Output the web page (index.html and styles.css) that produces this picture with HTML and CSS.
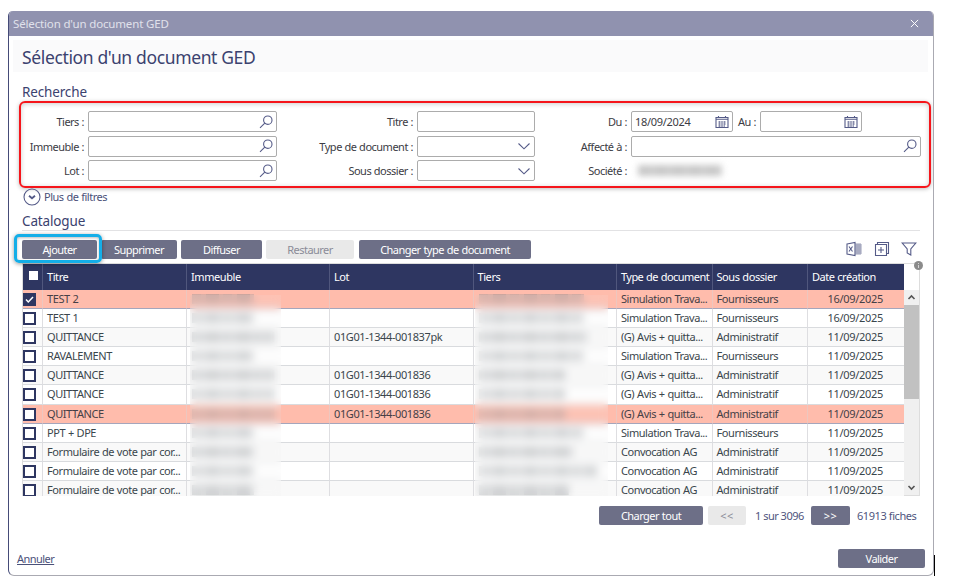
FILE: index.html
```
<!DOCTYPE html>
<html lang="fr">
<head>
<meta charset="utf-8">
<title>Sélection d'un document GED</title>
<link rel="stylesheet" href="styles.css">
</head>
<body>
<svg width="0" height="0" class="defs">
  <symbol id="search" viewBox="0 0 14 14"><circle cx="8.800" cy="5.200" r="4.200"/><path d="M5.800 8.200 1 12.800"/></symbol>
  <symbol id="chev" viewBox="0 0 14 14"><path d="M1.500 4.500 7 9.800l5.500-5.300"/></symbol>
  <symbol id="cal" viewBox="0 0 14 14"><path d="M1 2.500h12v10H1zM1 4.300h12M3.500 1v2M10.500 1v2"/><path class="thin" d="M3 7h8M3 9h8M3 11h6M4.500 6v6M7 6v6M9.500 6v6"/></symbol>
</svg>
<div class="dialog">
  <header class="titlebar"><span class="t-bar">Sélection d'un document GED</span>
    <svg class="close" viewBox="0 0 10 10"><path d="M1 1l8 8M9 1 1 9"/></svg></header>
  <div class="heading"><h1>Sélection d'un document GED</h1></div>
  <h2 class="h-search">Recherche</h2>
  <section class="filters">
    <label>Tiers :</label><div class="field"><svg><use href="#search"/></svg></div>
    <label>Titre :</label><div class="field"></div>
    <label>Du :</label><div class="dates"><div class="field date"><span>18/09/2024</span><svg><use href="#cal"/></svg></div><label>Au :</label><div class="field date"><svg><use href="#cal"/></svg></div></div>
    <label>Immeuble :</label><div class="field"><svg><use href="#search"/></svg></div>
    <label>Type de document :</label><div class="field"><svg><use href="#chev"/></svg></div>
    <label>Affecté à :</label><div class="field"><svg><use href="#search"/></svg></div>
    <label>Lot :</label><div class="field"><svg><use href="#search"/></svg></div>
    <label>Sous dossier :</label><div class="field"><svg><use href="#chev"/></svg></div>
    <label>Société :</label><div class="masked-value"><i></i></div>
  </section>
  <div class="more"><svg viewBox="0 0 18 18"><circle cx="9" cy="9" r="8"/><path d="M6 7.700 9 10.300l3-2.600"/></svg><span>Plus de filtres</span></div>
  <h2 class="h-cat">Catalogue</h2>
  <div class="toolbar">
    <button class="b1 focus">Ajouter</button><button class="b2">Supprimer</button><button class="b3">Diffuser</button><button class="b4 off">Restaurer</button><button class="b5">Changer type de document</button>
    <div class="tools">
      <svg viewBox="0 0 16 16"><path d="M1 3 9 1.500v13L1 13zM3 5.500l3.500 5M6.500 5.500 3 10.500"/><path class="thin" d="M9 3h6v10H9M11 3v10M13 3v10M9 5h6M9 7h6M9 9h6M9 11h6"/></svg>
      <svg viewBox="0 0 16 16"><path d="M1.500 3.500h11v11h-11zM3.500 3.500v-2h11v11h-2M7 6v6M4 9h6"/></svg>
      <svg viewBox="0 0 16 16"><path d="M1.200 2h13.600L9.800 8v6L6.200 12V8z"/></svg>
    </div>
  </div>
  <div class="grid">
    <div class="table">
      <div class="tr th"><div><b class="box"></b></div><div>Titre</div><div>Immeuble</div><div>Lot</div><div>Tiers</div><div>Type de document</div><div>Sous dossier</div><div>Date création</div></div>
      <div class="rows" id="rows"></div>
      <div class="veil v1"></div><div class="veil v2"></div>
    </div>
    <div class="scroll"><svg viewBox="0 0 15 15"><path d="M4.500 9 7.500 6l3 3"/></svg><div class="thumb"></div><svg class="down" viewBox="0 0 15 15"><path d="M4.500 6l3 3 3-3"/></svg></div>
    <svg class="info" viewBox="0 0 9 9"><circle cx="4.500" cy="4.500" r="4.500"/><path d="M4.500 4v3M4.500 2v1"/></svg>
  </div>
  <div class="pager"><button class="p1">Charger tout</button><button class="p2 off">&lt;&lt;</button><span class="pg">1 sur 3096</span><button class="p3">&gt;&gt;</button><span class="count">61913 fiches</span></div>
  <footer><a>Annuler</a><button>Valider</button></footer>
</div>
<div class="caret"></div>
<script src="rows.js"></script>
</body>
</html>
```
FILE: styles.css
```
* { box-sizing: border-box; }
body { margin: 0; width: 962px; height: 582px; overflow: hidden; background: #fff; font-family: "Noto Sans", sans-serif; font-size: 11px; letter-spacing: -0.42px; color: #3c3c44; padding: 11px 0 0 8px; display: flex; }
.defs { position: absolute; }
svg { fill: none; stroke: #555b88; stroke-width: 1.1; }
.thin { stroke-width: .6; }
.dialog { width: 926px; height: 565px; border: 1px solid #aaaab2; border-left-color: #454b78; border-top: 0; border-radius: 5px 5px 6px 6px; background: #fff; display: flex; flex-direction: column; flex: none; overflow: hidden; }
.titlebar { height: 25px; flex: none; background: #9092af; color: #e0e1eb; display: flex; align-items: center; justify-content: space-between; padding: 0 14px 0 4px; font-size: 11.500px; letter-spacing: -0.15px; }
.close { width: 9px; height: 9px; stroke: #fff; }
.heading { height: 32px; margin: 4px 5px 0 4px; background: #fafafb; flex: none; padding: 2px 0 0 9px; display: flex; align-items: center; }
h1, h2 { margin: 0; font-weight: 400; color: #3b426f; white-space: nowrap; }
h1 { font-size: 17.500px; line-height: 28px; letter-spacing: -0.36px; }
h2 { font-size: 13.500px; line-height: 18px; padding-left: 13px; letter-spacing: -0.15px; }
.h-search { margin-top: 11px; height: 18px; }
.filters { width: 912px; height: 87px; margin-left: 10px; border: 2px solid #f5151b; border-radius: 6px; box-shadow: 0 1px 4px #0004, inset 0 1px 5px #0003; flex: none; display: grid; grid-template-columns: 63px 189px 140px 118px 96px 290px; grid-template-rows: repeat(3, 21px); row-gap: 3.700px; padding: 8px 0 0 0; }
.filters label { text-align: right; line-height: 21px; white-space: nowrap; letter-spacing: -0.5px; word-spacing: 0.3px; }
.filters > .field, .dates, .masked-value { margin-left: 4px; margin-right: -4px; }
.field { border: 1px solid #acacac; border-radius: 2px; background: #fff; height: 21px; display: flex; align-items: center; justify-content: flex-end; padding-right: 3px; }
.field svg { width: 14px; height: 14px; }
.dates { display: flex; letter-spacing: -0.3px; }
.dates label { width: 23px; margin-right: 4px; }
.date { width: 102px; justify-content: space-between; padding-left: 3px; }
.date svg { margin-left: auto; }
.masked-value { padding: 5px 0 0 7px; }
.masked-value i { display: block; width: 84px; height: 11px; background: repeating-linear-gradient(90deg, #c8c8c8 0 12px, #cecece 12px 17px); filter: blur(3px); }
.more { height: 17px; display: flex; align-items: center; gap: 3px; padding-left: 14px; color: #4b5179; flex: none; letter-spacing: -0.5px; word-spacing: 0.5px; }
.more svg { width: 18px; height: 18px; }
.more span { margin-top: -1px; }
.more path { stroke-width: 1.800; }
.h-cat { height: 26px; border-bottom: 1px solid #e2e2e4; margin: 0 13px; padding: 7px 0 0; line-height: 18px; flex: none; }
.toolbar { display: flex; padding: 9px 17px 0 13px; height: 32px; flex: none; }
button { font: inherit; letter-spacing: -0.55px; word-spacing: 0.6px; color: #fff; background: #6d6f87; border: 0; border-radius: 2px; height: 19px; padding: 0; line-height: 18px; white-space: nowrap; margin-right: 4px; }
button.off { background: #e9e9e9; color: #8b8c98; }
.b1 { width: 75px; } .b2 { width: 76px; } .b3 { width: 81px; } .b4 { width: 88px; } .b5 { width: 172px; }
.b4 { margin-right: 5px; }
.focus { position: relative; z-index: 3; }
.focus::after { content: ""; position: absolute; inset: -6px -5px -4px -8px; border: 3px solid #14aee8; border-radius: 5px; box-shadow: 0 1px 4px #0006, inset 0 1px 3px #0004; }
.tools { margin-left: auto; display: flex; gap: 11.500px; }
.tools svg { width: 16px; height: 16px; margin: 1px -1px 0 1px; }
.grid { display: flex; height: 233px; margin: 0 13px; border: 1px solid #ddd; flex: none; position: relative; }
.table { width: 881px; height: 232px; overflow: hidden; position: relative; flex: none; }
.tr { display: grid; grid-template-columns: 20px 144px 143px 143.500px 143.500px 95.500px 95.500px 96px; height: 19.100px; color: #3a464c; background: #fff; }
.tr > div { border-bottom: 1px solid #d9dbde; border-right: 1px solid #dedee1; padding-left: 4px; line-height: 18.400px; white-space: nowrap; overflow: hidden; word-spacing: 0.3px; }
.tr > div:nth-child(4) { letter-spacing: -0.4px; }
.tr > div:last-child { letter-spacing: -0.3px; }
.tr > div:nth-child(6) { letter-spacing: -0.47px; word-spacing: 0.5px; }
.tr > div:first-child { padding-left: 0; }
.tr > div:last-child { border-right: 0; text-align: right; padding-right: 21px; }
.tr:nth-child(odd) { background: #f9f9f9; }
.tr.hl { background: #ffbcac; color: #464046; }
.tr.hl > div { border-bottom-color: #a5a6bc; border-right-color: #edc7bf; }
.tr.th { height: 26px; background: #2e3661; color: #fff; }
.tr.th > div { line-height: 25px; border-color: #50577d; border-bottom: 0; }
.tr.th > div:nth-child(6) { letter-spacing: -0.55px; }
.tr.th > div:last-child { text-align: left; letter-spacing: -0.45px; }
.box { display: block; width: 13px; height: 13px; border: 2px solid #2e3661; background: #fff; margin: 3px 0 0 0; }
.th .box { width: 9px; height: 9px; border: 0; margin: 7px 0 0 6px; }
.box svg { display: block; width: 9px; height: 9px; stroke: #fff; stroke-width: 1.500; background: #2e3661; }
.smear { display: block; height: 10px; margin: 4px 0 0 1px; background: repeating-linear-gradient(90deg, #8a909560 0 9px, #8a90954c 9px 14px, #80868b68 14px 27px, #8a90954c 27px 31px); }
.veil { position: absolute; top: 31px; bottom: 0; backdrop-filter: blur(4px); background: #f0f2f220; }
.v1 { left: 167px; width: 91px; } .v2 { left: 452px; width: 133px; }
.scroll { flex: 1; background: #f0f0f0; margin-top: 26px; display: flex; flex-direction: column; }
.scroll svg { width: 15px; height: 15px; stroke: #555; stroke-width: 1.600; }
.thumb { height: 94px; background: #c1c1c1; }
.scroll .down { margin-top: auto; }
.info { position: absolute; right: -4px; top: -3px; width: 9px; height: 9px; fill: #8b8b8b; stroke: #ddd; stroke-width: .900; }
.info circle { stroke: none; }
.pager { display: flex; align-items: center; justify-content: flex-start; padding: 10px 0 0 590px; height: 29px; color: #50567e; flex: none; }
.pager span { white-space: nowrap; }
.p1 { width: 104px; margin-right: 5px; } .p2 { width: 38px; margin-right: 9px; } .p3 { width: 39px; margin-right: 7px; }
.p2, .p3 { letter-spacing: 0.5px; }
.pg { width: 56px; letter-spacing: -0.5px; }
footer { margin-top: auto; display: flex; justify-content: space-between; align-items: center; padding: 0 4px 7px 8px; flex: none; }
footer a { text-decoration: underline; color: #4b5179; letter-spacing: -0.55px; }
footer button { width: 87px; }
.caret { width: 1px; height: 21px; background: #000; margin-top: 544px; }
```
FILE: rows.js
```
const rows = [
  ["TEST 2", 62, "", 105, "Simulation Trava...", "Fournisseurs", "16/09/2025", 1],
  ["TEST 1", 62, "", 105, "Simulation Trava...", "Fournisseurs", "16/09/2025"],
  ["QUITTANCE", 82, "01G01-1344-001837pk", 108, "(G) Avis + quitta...", "Administratif", "11/09/2025"],
  ["RAVALEMENT", 62, "", 105, "Simulation Trava...", "Fournisseurs", "11/09/2025"],
  ["QUITTANCE", 82, "01G01-1344-001836", 86, "(G) Avis + quitta...", "Administratif", "11/09/2025"],
  ["QUITTANCE", 82, "01G01-1344-001836", 86, "(G) Avis + quitta...", "Administratif", "11/09/2025"],
  ["QUITTANCE", 82, "01G01-1344-001836", 86, "(G) Avis + quitta...", "Administratif", "11/09/2025", 1],
  ["PPT + DPE", 62, "", 105, "Simulation Trava...", "Fournisseurs", "11/09/2025"],
  ["Formulaire de vote par cor...", 62, "", 94, "Convocation AG", "Administratif", "11/09/2025"],
  ["Formulaire de vote par cor...", 62, "", 118, "Convocation AG", "Administratif", "11/09/2025"],
  ["Formulaire de vote par cor...", 62, "", 90, "Convocation AG", "Administratif", "11/09/2025"]
];
const smear = w => `<i class="smear" style="width:${w}px"></i>`;
document.getElementById("rows").innerHTML = rows.map((r, i) => {
  const check = i === 0 ? '<svg viewBox="0 0 9 9"><path d="M1 4.500l2.300 2.500L8 2"/></svg>' : "";
  const cells = [`<b class="box">${check}</b>`, r[0], smear(r[1]), r[2], smear(r[3]), r[4], r[5], r[6]];
  return `<div class="tr${r[7] ? " hl" : ""}">${cells.map(c => `<div>${c}</div>`).join("")}</div>`;
}).join("");
```
